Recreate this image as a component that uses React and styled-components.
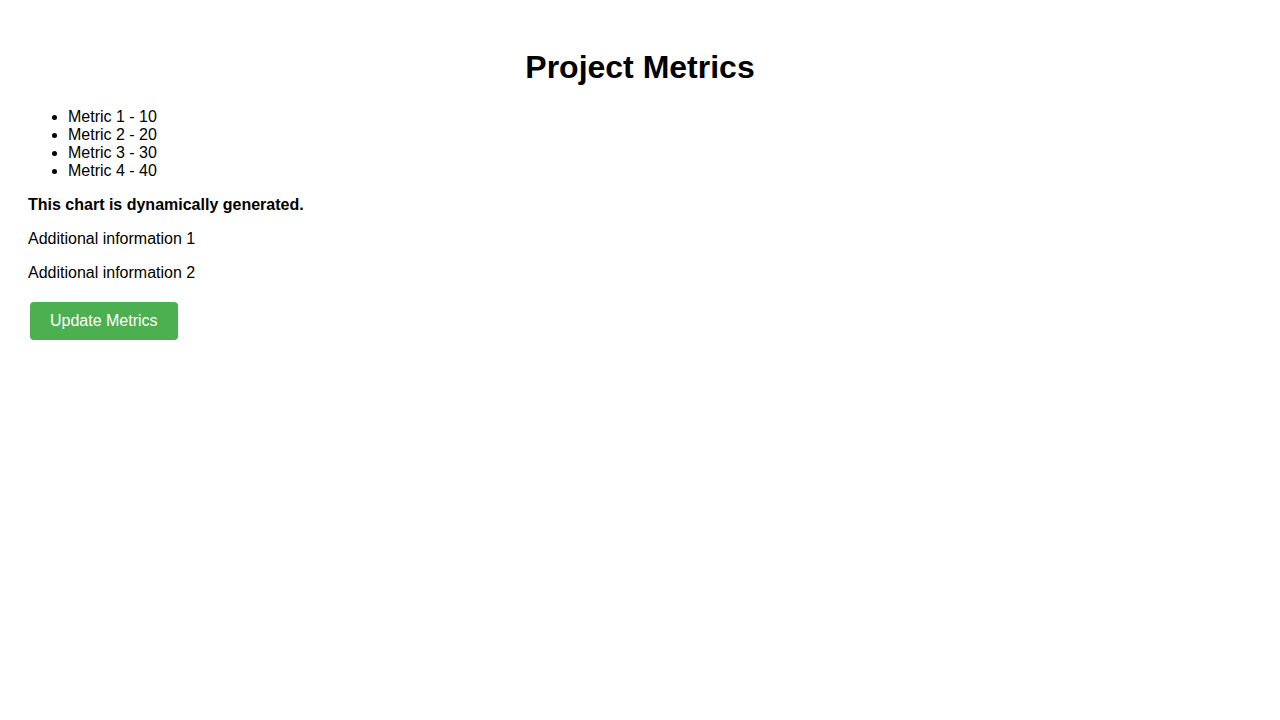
import React from "react";
import styled, { createGlobalStyle } from "styled-components";

const GlobalStyle = createGlobalStyle`
  body {
    margin: 8px;
    background: #ffffff;
    color: #000000;
    font-family: Arial, "Liberation Sans", sans-serif;
    font-size: 16px;
    line-height: 18px;
  }
`;

const Page = styled.main`
  padding: 20px;
`;

const Title = styled.h1`
  margin: 21px 0 22px;
  font-size: 32px;
  line-height: 37px;
  font-weight: bold;
  text-align: center;
`;

const MetricList = styled.ul`
  margin: 16px 0;
  padding-left: 40px;
  list-style: disc;
`;

const Metric = styled.li``;

const Paragraph = styled.p`
  margin: 16px 0;
  font-weight: ${({ $strong }) => ($strong ? "bold" : "normal")};
`;

const UpdateButton = styled.button`
  display: inline-block;
  margin: 4px 2px;
  padding: 10px 20px;
  border: none;
  border-radius: 4px;
  background: #4caf50;
  color: #ffffff;
  font-family: inherit;
  font-size: 16px;
  line-height: 18px;
  text-align: center;
  cursor: pointer;
`;

const metrics = [
  { name: "Metric 1", value: 10 },
  { name: "Metric 2", value: 20 },
  { name: "Metric 3", value: 30 },
  { name: "Metric 4", value: 40 },
];

export default function App() {
  return (
    <>
      <GlobalStyle />
      <Page>
        <Title>Project Metrics</Title>
        <MetricList>
          {metrics.map(({ name, value }) => (
            <Metric key={name}>{`${name} - ${value}`}</Metric>
          ))}
        </MetricList>
        <Paragraph $strong>This chart is dynamically generated.</Paragraph>
        <Paragraph>Additional information 1</Paragraph>
        <Paragraph>Additional information 2</Paragraph>
        <UpdateButton type="button">Update Metrics</UpdateButton>
      </Page>
    </>
  );
}
